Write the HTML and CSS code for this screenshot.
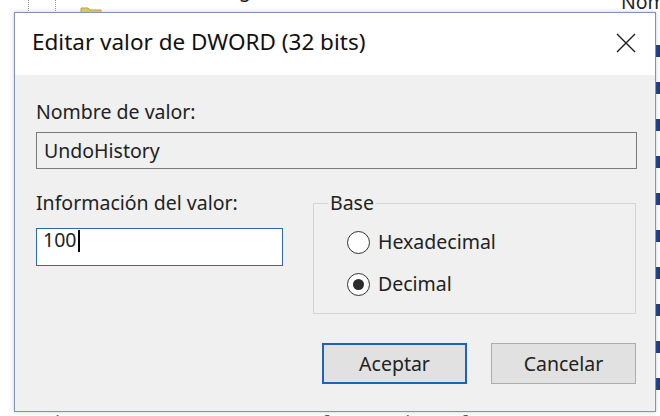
FILE: index.html
```html
<!DOCTYPE html>
<html lang="es">
<head>
<meta charset="utf-8">
<title>Editor del Registro</title>
<link rel="stylesheet" href="styles.css">
</head>
<body>
<div class="behind">
  <div class="tree">
    <div class="tree-item">
      <span class="tree-guide"></span>
      <span class="tree-guide second"></span>
      <svg class="folder" viewBox="0 0 22 18" width="22" height="18">
        <path d="M1 3 H8 L10 5 H21 V17 H1 Z" fill="#e8c85a" stroke="#c9a232" stroke-width="1"/>
        <path d="M1 7 H21" stroke="#f4dc8c" stroke-width="1"/>
      </svg>
      <span class="node-name">Internal Settings</span>
    </div>
    <div class="status">Equipo\HKEY_CURRENT_USER\Software\Microsoft</div>
  </div>
  <div class="list">
    <div class="list-head">
      <span class="col-sep"></span>
      <span class="col-sep second"></span>
      <span class="head-name">Nombre</span>
    </div>
    <div class="list-rows">
      <div class="list-row"><span class="val-icon"></span></div>
      <div class="list-row"><span class="val-icon"></span></div>
      <div class="list-row"><span class="val-icon"></span></div>
      <div class="list-row"><span class="val-icon"></span></div>
      <div class="list-row"><span class="val-icon"></span></div>
      <div class="list-row"><span class="val-icon"></span></div>
      <div class="list-row"><span class="val-icon"></span></div>
      <div class="list-row"><span class="val-icon"></span></div>
      <div class="list-row"><span class="val-icon"></span></div>
      <div class="list-row"><span class="val-icon"></span></div>
    </div>
  </div>
</div>

<div class="dialog">
  <div class="titlebar">
    <span class="title">Editar valor de DWORD (32 bits)</span>
    <svg class="close" viewBox="0 0 20 20" width="20" height="20">
      <path d="M1 1 L19 19 M19 1 L1 19" stroke="#1e1e1e" stroke-width="1.4" fill="none"/>
    </svg>
  </div>
  <div class="client">
    <div class="label">Nombre de valor:</div>
    <div class="field-ro">UndoHistory</div>
    <div class="body-row">
      <div class="col-left">
        <div class="label">Información del valor:</div>
        <div class="field-edit">100<span class="caret"></span></div>
      </div>
      <fieldset class="group">
        <legend>Base</legend>
        <div class="radio first"><span class="dot"></span>Hexadecimal</div>
        <div class="radio checked"><span class="dot"></span>Decimal</div>
      </fieldset>
    </div>
    <div class="buttons">
      <button class="btn default">Aceptar</button>
      <button class="btn">Cancelar</button>
    </div>
  </div>
</div>
</body>
</html>
```
FILE: styles.css
```css
* {
  box-sizing: border-box;
}

body {
  margin: 0;
  width: 660px;
  height: 416px;
  overflow: hidden;
  position: relative;
  background: #ffffff;
  font-family: "Noto Sans", "Open Sans", sans-serif;
  color: #222;
}

/* registry editor window underneath the dialog */
.behind {
  display: grid;
  grid-template-columns: 593px 67px;
  height: 416px;
  font-size: 19.5px;
  line-height: 26px;
}

.tree {
  display: flex;
  flex-direction: column;
  justify-content: space-between;
  height: 416px;
}

.tree-item {
  display: flex;
  align-items: center;
  height: 26px;
  margin-top: -23px;
}

.tree-guide {
  width: 1px;
  height: 40px;
  border-left: 1px dotted #9a9a9a;
  margin-left: 28px;
  align-self: flex-end;
  margin-bottom: -14px;
}

.tree-guide.second {
  margin-left: 26px;
}

.folder {
  margin-left: 24px;
  align-self: flex-end;
  margin-bottom: -20px;
}

.node-name {
  margin-left: 6px;
}

.status {
  margin-bottom: -20px;
  padding-left: 20px;
  color: #555;
}

.list {
  display: flex;
  flex-direction: column;
}

.list-head {
  display: flex;
  align-items: center;
  height: 26px;
  margin-top: -11px;
}

.col-sep {
  width: 1px;
  height: 26px;
  background: #d4d4d4;
}

.col-sep.second {
  margin-left: 13px;
}

.head-name {
  margin-left: 15px;
  white-space: nowrap;
}

.list-rows {
  padding-top: 17px;
}

.list-row {
  height: 37px;
  display: flex;
  align-items: center;
  padding-left: 61px;
}

.val-icon {
  width: 12px;
  height: 12px;
  background: #1f3a86;
  flex: none;
}

/* dialog window */
.dialog {
  position: absolute;
  left: 14px;
  top: 12px;
  width: 642px;
  height: 400px;
  border: 1px solid #7f94b3;
  box-shadow: 0 0 4px rgba(90, 120, 160, 0.35);
  background: #f0f0f0;
  display: flex;
  flex-direction: column;
}

.titlebar {
  height: 62px;
  flex: none;
  background: #ffffff;
  display: flex;
  align-items: center;
  justify-content: space-between;
  padding: 0 19px 4px 17px;
}

.title {
  font-size: 22.5px;
  line-height: 28px;
  color: #111;
}

.close {
  margin-top: 2px;
}

.client {
  flex: 1;
  padding: 24px 18px 0 21px;
  font-size: 19.5px;
  line-height: 26px;
}

.label {
  height: 26px;
  white-space: nowrap;
}

.field-ro {
  margin-top: 7px;
  height: 37px;
  border: 1px solid #7a7a7a;
  background: #f0f0f0;
  display: flex;
  align-items: center;
  padding: 0 7px;
}

.body-row {
  margin-top: 21px;
  display: grid;
  grid-template-columns: 247px 323px;
  column-gap: 30px;
  align-items: start;
}

.field-edit {
  margin-top: 12px;
  height: 38px;
  border: 1px solid #2d6cb0;
  background: #ffffff;
  padding: 1px 6px 0;
  line-height: 20px;
  display: flex;
  align-items: flex-start;
}

.caret {
  width: 1.5px;
  height: 22px;
  margin-left: 2px;
  background: #000;
}

.group {
  margin: 0;
  padding: 0 0 16px 0;
  min-width: 0;
  border: 1px solid #d5d5d5;
}

.group legend {
  margin-left: 14px;
  padding: 0 2px;
  line-height: 26px;
}

.radio {
  display: flex;
  align-items: center;
  gap: 8px;
  height: 26px;
  margin-left: 33px;
  margin-top: 16px;
}

.radio.first {
  margin-top: 13px;
}

.dot {
  width: 23px;
  height: 23px;
  flex: none;
  border-radius: 50%;
  border: 1.5px solid #333;
  background: #fff;
  display: flex;
  align-items: center;
  justify-content: center;
}

.radio.checked .dot::after {
  content: "";
  width: 11px;
  height: 11px;
  border-radius: 50%;
  background: #2b2b2b;
}

.buttons {
  display: flex;
  justify-content: flex-end;
  gap: 24px;
  margin-top: 29px;
  padding-right: 1px;
}

.btn {
  width: 145px;
  height: 41px;
  padding: 0;
  font-family: inherit;
  font-size: 19.5px;
  color: #222;
  background: #e1e1e1;
  border: 1px solid #adadad;
}

.btn.default {
  border: 2px solid #1c64b4;
}
```
